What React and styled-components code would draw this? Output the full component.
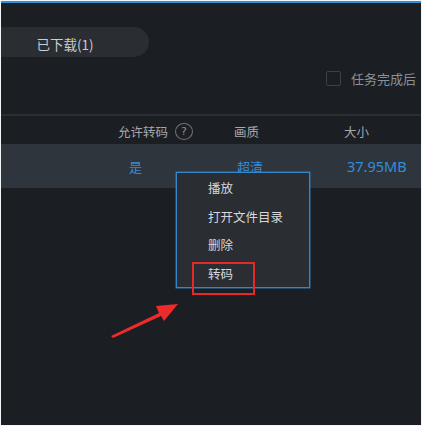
import React from "react";
import styled, { createGlobalStyle } from "styled-components";

const Global = createGlobalStyle`
  html, body { margin: 0; padding: 0; background: #f4f5f6; }
  body { font-family: "Noto Sans CJK SC", "Noto Sans", sans-serif; }
  * { box-sizing: border-box; }
`;

const Frame = styled.div`
  position: relative;
  width: 420px;
  height: 424px;
  margin: 1px 1px 1px 1px;
  background: #1b1e22;
  border-top: 2px solid #2f8fdc;
  overflow: hidden;
  display: flex;
  flex-direction: column;
`;

const TabRow = styled.div`
  padding-top: 24px;
  height: 55px;
`;

const Tab = styled.div`
  width: 148px;
  height: 30px;
  background: #2a2e33;
  border-radius: 0 15px 15px 0;
  display: flex;
  align-items: center;
  justify-content: center;
  padding: 3px 20px 0 0;
  color: #c9ccd0;
  font-size: 13.5px;
`;

const OptionRow = styled.div`
  height: 56px;
  display: flex;
  align-items: flex-start;
  padding-left: 325px;
  padding-top: 13px;
  gap: 10px;
  white-space: nowrap;
`;

const Check = styled.span`
  width: 15px;
  height: 15px;
  border: 1px solid #3d4147;
  border-radius: 2px;
  flex: none;
`;

const OptionText = styled.span`
  color: #8c9197;
  font-size: 13px;
  line-height: 17px;
  margin-top: -1px;
`;

const Divider = styled.div`
  height: 2px;
  background: #2a2e33;
`;

const Grid = styled.div`
  display: grid;
  grid-template-columns: 117px 116px 110px 1fr;
  align-items: center;
  height: ${(p) => p.$h}px;
  background: ${(p) => p.$bg || "transparent"};
  white-space: nowrap;
`;

const HeadCell = styled.div`
  grid-column: ${(p) => p.$col};
  color: #a3a8ae;
  font-size: 12.5px;
  display: flex;
  align-items: center;
  gap: 7px;
  margin-top: 2px;
`;

const Help = styled.span`
  width: 18px;
  height: 17px;
  border: 1.5px solid #6e7379;
  border-radius: 50%;
  color: #8d9298;
  font-family: "DejaVu Sans", sans-serif;
  font-size: 11px;
  display: inline-flex;
  align-items: center;
  justify-content: center;
`;

const DataCell = styled.div`
  grid-column: ${(p) => p.$col};
  padding-left: ${(p) => p.$pad}px;
  color: #2f8fdd;
  font-size: ${(p) => p.$size || 13}px;
  font-family: "Noto Sans", "Noto Sans CJK SC", sans-serif;
`;

const Menu = styled.div`
  position: absolute;
  left: 175px;
  top: 169px;
  width: 134px;
  height: 116px;
  background: #2a2e33;
  border: 1px solid #3187c8;
  box-shadow: 0 0 0 0.5px #2a77b0;
  display: flex;
  flex-direction: column;
  padding: 0 0 0 31px;
`;

const MenuItem = styled.div`
  flex: none;
  height: 28.7px;
  display: flex;
  align-items: center;
  color: #d6d8db;
  font-size: 12.5px;
`;

const Highlight = styled.div`
  position: absolute;
  left: 191px;
  top: 259px;
  width: 63px;
  height: 33px;
  border: 2.5px solid #e5292b;
`;

const Arrow = styled.svg`
  position: absolute;
  left: 0;
  top: 0;
  pointer-events: none;
`;

export default function App() {
  return (
    <>
      <Global />
      <Frame>
        <TabRow>
          <Tab>已下载(1)</Tab>
        </TabRow>
        <OptionRow>
          <Check />
          <OptionText>任务完成后</OptionText>
        </OptionRow>
        <Divider />
        <Grid $h={28}>
          <HeadCell $col={2}>
            允许转码<Help>?</Help>
          </HeadCell>
          <HeadCell $col={3}>画质</HeadCell>
          <HeadCell $col={4}>大小</HeadCell>
        </Grid>
        <Grid $h={44} $bg="#2f353c">
          <DataCell $col={2} $pad={11}>是</DataCell>
          <DataCell $col={3} $pad={3}>超清</DataCell>
          <DataCell $col={4} $pad={3} $size={14.5}>37.95MB</DataCell>
        </Grid>
        <Menu>
          <MenuItem>播放</MenuItem>
          <MenuItem>打开文件目录</MenuItem>
          <MenuItem>删除</MenuItem>
          <MenuItem>转码</MenuItem>
        </Menu>
        <Highlight />
        <Arrow width="420" height="424" viewBox="0 0 420 424">
          <polygon
            points="110,333 158,310 155,303 177,301 163,318 160,313 112,335"
            fill="#ee2a2a"
          />
        </Arrow>
      </Frame>
    </>
  );
}
